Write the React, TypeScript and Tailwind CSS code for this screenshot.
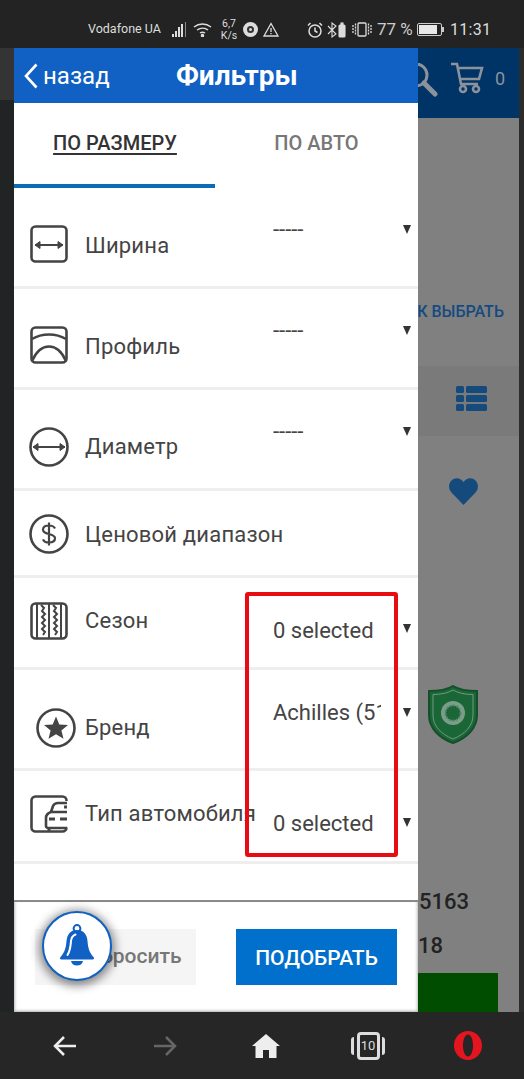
import React from 'react';

const Arrow = ({ className = '' }: { className?: string }) => (
  <span className={`w-0 h-0 border-l-[4.5px] border-r-[4.5px] border-t-[9px] border-l-transparent border-r-transparent border-t-[#333] ${className}`} />
);

const WidthIcon = () => (
  <svg width="38" height="38" viewBox="0 0 38 38" fill="none" stroke="#444" strokeWidth="2.600">
    <rect x="1.500" y="1.500" width="35" height="35" rx="4" />
    <path d="M5 20h28" strokeWidth="2" />
    <path d="M10 16.500 5 20l5 3.500zM28 16.500 33 20l-5 3.500z" fill="#444" strokeWidth="1" />
  </svg>
);

const ProfileIcon = () => (
  <svg width="38" height="38" viewBox="0 0 38 38" fill="none" stroke="#444" strokeWidth="2.600">
    <rect x="1.500" y="1.500" width="35" height="35" rx="4" />
    <path d="M2 13c10-6 24-6 34 0" />
    <path d="M2 35C6 26 12 20.500 19 20.500S32 26 36 35" />
  </svg>
);

const DiameterIcon = () => (
  <svg width="40" height="40" viewBox="0 0 40 40" fill="none" stroke="#444" strokeWidth="2.600">
    <circle cx="20" cy="20" r="18.500" />
    <path d="M4 20h32" strokeWidth="2" />
    <path d="M9 16.500 4 20l5 3.500zM31 16.500 36 20l-5 3.500z" fill="#444" strokeWidth="1" />
  </svg>
);

const DollarIcon = () => (
  <svg width="40" height="40" viewBox="0 0 40 40" fill="none" stroke="#444" strokeWidth="2.600">
    <circle cx="20" cy="20" r="18.500" />
    <path d="M26 14.500c-1-2-3-3-6-3-3.500 0-6 1.600-6 4.200 0 5.800 12 2.800 12 8.600 0 2.600-2.500 4.200-6 4.200-3 0-5.200-1.200-6-3.200M20 8.500v23" strokeWidth="2.200" />
  </svg>
);

const SeasonIcon = () => (
  <svg width="38" height="38" viewBox="0 0 38 38" fill="none" stroke="#444" strokeWidth="2.600">
    <rect x="1.500" y="1.500" width="35" height="35" rx="4" />
    <path d="M7 2v34M19 2v34M31 2v34" strokeWidth="2" />
    <path d="M11 3l3 3-2 3 3 3-3 3 3 3-3 3 3 3-3 3 3 3-2 3M23 3l3 3-2 3 3 3-3 3 3 3-3 3 3 3-3 3 3 3-2 3" strokeWidth="2" />
  </svg>
);

const StarIcon = () => (
  <svg width="40" height="40" viewBox="0 0 40 40" fill="none" stroke="#444" strokeWidth="2.600">
    <circle cx="20" cy="20" r="18.500" />
    <path d="m20 8.500 3.300 7.900 8.700.6-6.600 5.500 2.100 8.300-7.500-4.500-7.500 4.500 2.100-8.300L8 17l8.700-.6z" fill="#444" stroke="none" />
  </svg>
);

const CarIcon = () => (
  <svg width="38" height="38" viewBox="0 0 38 38" fill="none" stroke="#444" strokeWidth="2.600">
    <path d="M36.500 6V5.500a4 4 0 0 0-4-4h-27a4 4 0 0 0-4 4v27a4 4 0 0 0 4 4h27a4 4 0 0 0 4-4" />
    <path d="M37 8h-9c-3 0-4 1-5 3l-2 6" />
    <path d="M37 17H21c-3 1-5 3-5 6v8c0 1 1 2 2 2h19" />
    <path d="M19 24h6M30 24h7M19 33v3M34 12h3" strokeWidth="3" />
  </svg>
);

const BellIcon = () => (
  <svg width="36" height="44" viewBox="0 0 36 44" fill="#1160c4">
    <circle cx="18" cy="4.500" r="3.400" fill="none" stroke="#1160c4" strokeWidth="2" />
    <path d="M18 6c6.500 0 10 4.500 10.500 11 .5 6.500 1.500 11 6 16 1 1.200.5 2.500-1 2.500H2.500c-1.500 0-2-1.300-1-2.500 4.500-5 5.500-9.500 6-16C8 10.500 11.500 6 18 6z" />
    <path d="M12 37h12c-.5 3-3 4.500-6 4.500S12.500 40 12 37z" />
    <path d="M8.500 31c3-4.500 3-9 3.500-14 .3-3 2-5.500 4.500-6.500" fill="none" stroke="#fff" strokeWidth="2" strokeLinecap="round" />
  </svg>
);

const SignalIcon = () => (
  <svg width="16" height="15" viewBox="0 0 16 15" fill="#ddd">
    <rect x="0" y="12" width="2" height="3" />
    <rect x="3" y="9" width="2" height="6" />
    <rect x="6" y="5" width="2" height="10" />
    <rect x="9" y="2" width="2" height="13" />
    <rect x="13" y="0" width="1" height="15" fill="#888" />
  </svg>
);

const rows = [
  { label: 'Ширина', icon: <WidthIcon />, h: 'h-[101px]', iconBox: 'pl-4 pt-[37px]', textTop: 'mt-[44px]', value: '-----', valTop: 'mt-[28px]', arrow: 'mt-[37px]' },
  { label: 'Профиль', icon: <ProfileIcon />, h: 'h-[101px]', iconBox: 'pl-4 pt-[37px]', textTop: 'mt-[44px]', value: '-----', valTop: 'mt-[28px]', arrow: 'mt-[37px]' },
  { label: 'Диаметр', icon: <DiameterIcon />, h: 'h-[101px]', iconBox: 'pl-[15px] pt-[37px]', textTop: 'mt-[43px]', value: '-----', valTop: 'mt-[28px]', arrow: 'mt-[37px]' },
  { label: 'Ценовой диапазон', icon: <DollarIcon />, h: 'h-[87px]', iconBox: 'pl-[15px] pt-[23px]', textTop: 'mt-[30px]' },
  { label: 'Сезон', icon: <SeasonIcon />, h: 'h-[92px]', iconBox: 'pl-4 pt-[24px]', textTop: 'mt-[29px]', value: '0 selected', valTop: 'mt-[39px]', arrow: 'mt-[46px]' },
  { label: 'Бренд', icon: <StarIcon />, h: 'h-[101px]', iconBox: 'pl-[22px] pt-[38px]', textTop: 'mt-[44px]', value: 'Achilles (51)', valTop: 'mt-[29px]', arrow: 'mt-[38px]' },
  { label: 'Тип автомобиля', icon: <CarIcon />, h: 'h-[93px]', iconBox: 'pl-4 pt-[24px]', textTop: 'mt-[29px]', value: '0 selected', valTop: 'mt-[39px]', arrow: 'mt-[47px]' },
];

export default function App() {
  return (
    <div className="w-[524px] h-[1079px] overflow-hidden flex flex-col bg-[#222] font-['Roboto',sans-serif]">
      {/* status bar */}
      <div className="h-[48px] shrink-0 bg-[#232323] flex items-center pt-[11px] pl-[88px] text-[#ddd]">
        <span className="text-[12.5px] w-[84px]">Vodafone UA</span>
        <SignalIcon />
        <svg className="ml-[5px]" width="19" height="15" viewBox="0 0 19 15" fill="none" stroke="#ddd" strokeWidth="1.500">
          <path d="M1 5c5-4 12-4 17 0M4 8c3.500-2.500 8-2.500 11 0M7 11c1.500-1 3.500-1 5 0" />
          <circle cx="9.500" cy="13.500" r="1" fill="#ddd" />
        </svg>
        <span className="ml-[8px] w-[18px] text-[10.5px] leading-[12px] text-center">6,7<br />K/s</span>
        <span className="ml-[5px] w-[15px] h-[15px] rounded-full bg-[#ddd] flex items-center justify-center">
          <span className="w-[7px] h-[7px] rounded-full border-2 border-[#333]" />
        </span>
        <svg className="ml-[5px]" width="16" height="15" viewBox="0 0 16 15" fill="none" stroke="#ddd" strokeWidth="1.300">
          <path d="M8 1.500 15 14H1zM8 6v4M8 11v1.300" />
        </svg>
        <svg className="ml-[28px]" width="16" height="16" viewBox="0 0 16 16" fill="none" stroke="#ddd" strokeWidth="1.500">
          <circle cx="8" cy="9" r="6" />
          <path d="M8 5.500V9l2.500 1.500M1 3.500 3.500 1M15 3.500 12.500 1" />
        </svg>
        <svg className="ml-[4px]" width="20" height="16" viewBox="0 0 20 16" fill="none" stroke="#ddd" strokeWidth="1.100">
          <path d="M1 4l8 8-4 3V1l4 3-8 8" />
          <rect x="12" y="3" width="6" height="12" rx="1" fill="#ddd" />
          <rect x="14" y="1" width="2" height="2" fill="#ddd" />
        </svg>
        <svg className="ml-[5px]" width="20" height="15" viewBox="0 0 20 15" fill="none" stroke="#ddd" strokeWidth="1.300">
          <rect x="6" y="1" width="8" height="13" rx="1" />
          <path d="M1 3v9M3.500 1.500v12M16.500 1.500v12M19 3v9" strokeDasharray="2 1" />
        </svg>
        <span className="ml-[5px] text-[17px] w-[40px] whitespace-nowrap text-[#ccc]">77 %</span>
        <span className="w-[25px] h-[13px] rounded-[2px] border border-[#ccc] p-[1px]">
          <span className="block w-[18px] h-full bg-[#e8e8e8]" />
        </span>
        <span className="w-[2px] h-[5px] bg-[#ccc]" />
        <span className="ml-[6px] text-[16px] tracking-[0.3px]">11:31</span>
      </div>

      <div className="flex-1 min-h-0 flex">
        {/* page behind, left edge */}
        <div className="w-[14px] shrink-0 flex flex-col">
          <div className="h-[52px] bg-[#343434]" />
          <div className="flex-1 bg-[#212424]" />
        </div>

        {/* drawer */}
        <div className="relative w-[404px] shrink-0 bg-white flex flex-col">
          <div className="h-[55px] shrink-0 bg-[#1160c4] flex items-center text-white">
            <svg className="ml-[10px] shrink-0" width="14" height="26" viewBox="0 0 14 26" fill="none" stroke="#fff" strokeWidth="2.600">
              <path d="M12.500 1.500 2 13l10.500 11.500" />
            </svg>
            <span className="ml-[5px] text-[24px] w-[133px]">назад</span>
            <span className="text-[28px] leading-[32px] font-bold">Фильтры</span>
          </div>

          <div className="h-[85px] shrink-0 flex">
            <div className="w-[201px] h-full border-b-4 border-[#0a6cb8] flex justify-center pt-[28px] pl-[1px]">
              <span className="text-[20px] leading-[24px] font-medium text-[#333] underline underline-offset-[3px]">ПО РАЗМЕРУ</span>
            </div>
            <div className="flex-1 flex justify-center pt-[28px]">
              <span className="text-[20px] leading-[24px] font-medium text-[#777]">ПО АВТО</span>
            </div>
          </div>

          <div className="flex-1 min-h-0">
            {rows.map((row) => (
              <div key={row.label} className={`${row.h} flex border-b-[3px] border-[#eeeeee]`}>
                <div className="w-[258px] shrink-0 flex items-start whitespace-nowrap">
                  <div className={`${row.iconBox} shrink-0 w-[71px]`}>{row.icon}</div>
                  <span className={`${row.textTop} text-[22px] leading-[28px] text-[#444] tracking-[0.2px]`}>{row.label}</span>
                </div>
                {row.value && (
                  <div className="flex-1 flex">
                    <span className={`${row.valTop} ml-[1px] w-[108px] overflow-hidden whitespace-nowrap text-[22px] leading-[28px] text-[#444]`}>{row.value}</span>
                    <Arrow className={`${row.arrow} ml-[22px]`} />
                  </div>
                )}
              </div>
            ))}
          </div>

          <div className="h-[112px] shrink-0 border-t-2 border-[#8a8a8a] bg-white flex items-start justify-between pt-[27px] px-[21px] shadow-[inset_3px_0_3px_-2px_#bbb,inset_-3px_0_3px_-2px_#bbb,inset_0_-3px_3px_-2px_#aaa]">
            <button className="w-[161px] h-[56px] bg-[#f5f5f5] text-[21px] font-medium text-[#777] pl-[38px]">Сбросить</button>
            <button className="w-[161px] h-[56px] bg-[#0070cc] text-[21px] font-medium text-white pt-[3px]">ПОДОБРАТЬ</button>
          </div>

          {/* red annotation */}
          <div className="absolute left-[231px] top-[544px] w-[153px] h-[265px] border-4 border-[#e80c12] rounded-[3px]" />

          {/* floating bell */}
          <div className="absolute left-[28px] top-[863px] w-[70px] h-[70px] rounded-full bg-white border-2 border-[#1160c4] shadow-[0_2px_10px_3px_rgba(0,0,0,0.45)] flex items-center justify-center">
            <BellIcon />
          </div>
        </div>

        {/* page behind, dimmed */}
        <div className="w-[101px] shrink-0 bg-[#808080] flex flex-col overflow-hidden">
          <div className="h-[70px] shrink-0 bg-[#003366] flex items-start pt-[15px]">
            <svg className="ml-[-14px] shrink-0" width="34" height="34" viewBox="0 0 34 34" fill="none" stroke="#8b929b" strokeWidth="3">
              <circle cx="12" cy="12" r="11" />
              <path d="m20 20 11 11" strokeWidth="5" strokeLinecap="round" />
            </svg>
            <svg className="ml-[12px] mt-[-1px] shrink-0" width="34" height="32" viewBox="0 0 34 32" fill="none" stroke="#8b929b" strokeWidth="2.600">
              <path d="M1 2h6l4 20h17M8 6h24l-3 11H11" />
              <circle cx="13" cy="27" r="3" />
              <circle cx="26" cy="27" r="3" />
            </svg>
            <span className="ml-[11px] mt-[2px] text-[18px] text-[#8b929b]">0</span>
          </div>
          <div className="h-[248px] shrink-0 flex justify-end pr-[15px] pt-[184px]">
            <span className="text-[16px] leading-[20px] font-medium text-[#154a80] whitespace-nowrap">К ВЫБРАТЬ</span>
          </div>
          <div className="h-[70px] shrink-0 bg-[#7a7a7a] flex items-center justify-center pl-[6px] pb-[6px]">
            <svg width="31" height="25" viewBox="0 0 31 25" fill="#154a7c">
              <rect x="0" y="0" width="8" height="7" rx="1.500" />
              <rect x="10" y="0" width="21" height="7" rx="1.500" />
              <rect x="0" y="9" width="8" height="7" rx="1.500" />
              <rect x="10" y="9" width="21" height="7" rx="1.500" />
              <rect x="0" y="18" width="8" height="7" rx="1.500" />
              <rect x="10" y="18" width="21" height="7" rx="1.500" />
            </svg>
          </div>
          <div className="h-[320px] shrink-0 pt-[42px] pl-[31px]">
            <svg width="29" height="27" viewBox="0 0 29 27" fill="#154a7c">
              <path d="M14.500 27 2.500 14.500C-1 11-.5 5.500 2.500 2.500c3.500-3.500 9-3 12 1.500 3-4.500 8.500-5 12-1.500 3 3 3.500 8.500 0 12z" />
            </svg>
            <svg className="mt-[180px] ml-[-21px]" width="50" height="59" viewBox="0 0 50 59" fill="none">
              <path d="M25 1c6 3.500 14 5 24 5v24c0 13-10 23-24 28C11 53 1 43 1 30V6c10 0 18-1.500 24-5z" fill="#1a6636" stroke="#144f2a" strokeWidth="2" />
              <path d="M25 5c5 3 12 4.500 20 4.500V30c0 11-8 19-20 24C13 49 5 41 5 30V9.500C13 9.500 20 8 25 5z" stroke="#6f9a80" strokeWidth="1" />
              <circle cx="25" cy="28" r="12" fill="#7a9e8a" />
              <circle cx="25" cy="28" r="7.500" fill="#1a6636" stroke="#4e8468" strokeWidth="2" strokeDasharray="2 1.500" />
            </svg>
          </div>
          <div className="flex-1 min-h-0 pl-[1px] pt-[132px] flex flex-col text-[22px] leading-[28px] font-medium text-[#222]">
            <span>5163</span>
          </div>
          <div className="h-[80px] shrink-0 flex flex-col">
            <span className="h-[41px] text-[22px] leading-[28px] font-medium text-[#222] whitespace-nowrap">18</span>
            <div className="flex-1 w-[80px] bg-[#004d00]" />
          </div>
        </div>

        <div className="flex-1 bg-[#2c2c2c]" />
      </div>

      {/* browser bottom bar */}
      <div className="h-[67px] shrink-0 bg-[#262626] flex items-center">
        <svg className="ml-[52px] shrink-0" width="25" height="22" viewBox="0 0 25 22" fill="none" stroke="#eee" strokeWidth="2.500">
          <path d="M24 11H3M12 2l-9 9 9 9" />
        </svg>
        <svg className="ml-[76px] shrink-0" width="25" height="22" viewBox="0 0 25 22" fill="none" stroke="#666" strokeWidth="2.500">
          <path d="M1 11h21M13 2l9 9-9 9" />
        </svg>
        <svg className="ml-[74px] shrink-0" width="28" height="24" viewBox="0 0 28 24" fill="#eee">
          <path d="M14 0 28 12h-3.500v12H17v-8h-6v8H3.500V12H0z" />
        </svg>
        <div className="ml-[71px] shrink-0 relative w-[34px] h-[28px] flex items-center justify-center">
          <span className="absolute left-0 top-[5px] bottom-[5px] w-full border-x-[3px] border-[#ddd] rounded-[3px]" />
          <span className="relative w-[23px] h-[28px] border-[3px] border-[#ddd] rounded-[4px] bg-[#262626] text-[13px] leading-[22px] text-center text-[#ddd]">10</span>
        </div>
        <svg className="ml-[69px] shrink-0" width="28" height="29" viewBox="0 0 28 29">
          <path fillRule="evenodd" clipRule="evenodd" d="M14 0c8 0 14 6.500 14 14.500S22 29 14 29 0 22.500 0 14.500 6 0 14 0zm0 3.500c-3 0-5 5-5 11s2 11 5 11 5-5 5-11-2-11-5-11z" fill="#e3151f" />
        </svg>
      </div>
    </div>
  );
}
